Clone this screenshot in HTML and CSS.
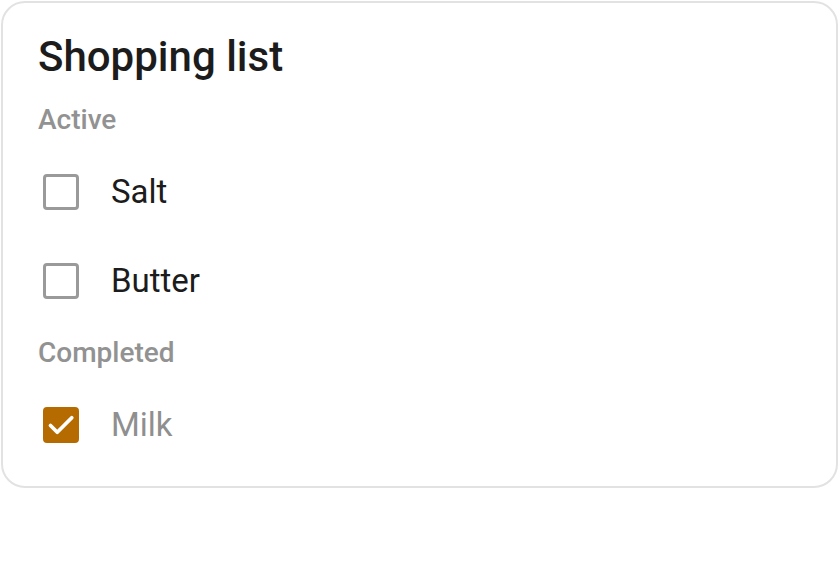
FILE: index.html
```html
<!DOCTYPE html>
<html lang="en">
<head>
    <meta charset="UTF-8">
    <meta name="viewport" content="width=device-width, initial-scale=1.0">
    <title>Shopping list</title>
    <link rel="stylesheet" href="styles.css">
</head>
<body>
    <div class="card">
        <h2 class="card-title">Shopping list</h2>

        <div class="section-label">Active</div>
        <label class="item">
            <span class="box"></span>
            <span class="item-text">Salt</span>
        </label>
        <label class="item">
            <span class="box"></span>
            <span class="item-text">Butter</span>
        </label>

        <div class="section-label">Completed</div>
        <label class="item done">
            <span class="box checked">
                <svg viewBox="0 0 24 24" width="30" height="30">
                    <path d="M3.6 12.4l5.4 5.4L20.6 6.2" fill="none" stroke="#fff" stroke-width="3" stroke-linecap="round" stroke-linejoin="round"/>
                </svg>
            </span>
            <span class="item-text">Milk</span>
        </label>
    </div>
</body>
</html>
```

FILE: styles.css
```css
body {
    margin: 1px;
    background: #fff;
    font-family: Roboto, 'Noto Sans', sans-serif;
    color: #1f1f1f;
}
.card {
    width: 837px;
    box-sizing: border-box;
    border: 2px solid #e2e2e2;
    border-radius: 24px;
    padding: 29px 33px 17px 35px;
}
.card-title {
    margin: 0 0 10px 0;
    font-size: 42px;
    line-height: 50px;
    font-weight: 500;
    color: #1c1c1c;
}
.section-label {
    height: 55px;
    line-height: 55px;
    font-size: 28px;
    font-weight: 500;
    color: #929292;
}
.item {
    display: flex;
    align-items: center;
    height: 89px;
    padding-left: 5px;
}
.box {
    width: 36px;
    height: 36px;
    box-sizing: border-box;
    border: 3px solid #9a9a9a;
    border-radius: 4px;
    display: flex;
    align-items: center;
    justify-content: center;
    flex-shrink: 0;
}
.box.checked {
    background: #b56b00;
    border-color: #b56b00;
}
.item-text {
    margin-left: 32px;
    font-size: 33px;
    color: #1c1c1c;
}
.done .item-text {
    color: #8f8f8f;
}
```
